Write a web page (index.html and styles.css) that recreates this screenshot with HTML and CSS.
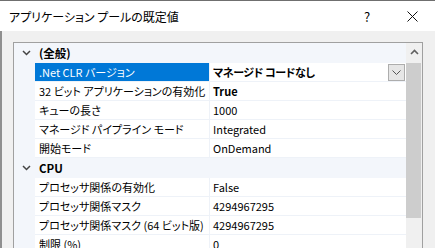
FILE: index.html
```html
<!DOCTYPE html>
<html lang="ja">
<head>
    <meta charset="UTF-8">
    <title>アプリケーション プールの既定値</title>
    <link rel="stylesheet" href="styles.css">
</head>
<body>
    <div class="window">
        <div class="titlebar">
            <span class="title">アプリケーション プールの既定値</span>
            <span class="help">?</span>
            <span class="close">
                <svg width="11" height="11" viewBox="0 0 11 11"><path d="M0.5 0.5 L10.5 10.5 M10.5 0.5 L0.5 10.5" stroke="#111" stroke-width="1" fill="none"/></svg>
            </span>
        </div>

        <div class="content">
            <div class="grid">
                <div class="rows">
                    <div class="category">
                        <span class="toggle"><svg width="9" height="6" viewBox="0 0 9 6"><polyline points="1,1 4.5,4.5 8,1" stroke="#444" stroke-width="1.5" fill="none"/></svg></span>
                        <span class="cat-name">(全般)</span>
                    </div>
                    <div class="row selected">
                        <span class="name">.Net CLR バージョン</span>
                        <span class="value bold">マネージド コードなし
                            <span class="dropdown"><svg width="9" height="5" viewBox="0 0 9 5"><polyline points="0.5,0.5 4.5,4.5 8.5,0.5" stroke="#555" stroke-width="1" fill="none"/></svg></span>
                        </span>
                    </div>
                    <div class="row">
                        <span class="name">32 ビット アプリケーションの有効化</span>
                        <span class="value bold">True</span>
                    </div>
                    <div class="row">
                        <span class="name">キューの長さ</span>
                        <span class="value">1000</span>
                    </div>
                    <div class="row">
                        <span class="name">マネージド パイプライン モード</span>
                        <span class="value">Integrated</span>
                    </div>
                    <div class="row">
                        <span class="name">開始モード</span>
                        <span class="value">OnDemand</span>
                    </div>
                    <div class="category">
                        <span class="toggle"><svg width="9" height="6" viewBox="0 0 9 6"><polyline points="1,1 4.5,4.5 8,1" stroke="#444" stroke-width="1.5" fill="none"/></svg></span>
                        <span class="cat-name">CPU</span>
                    </div>
                    <div class="row">
                        <span class="name">プロセッサ関係の有効化</span>
                        <span class="value">False</span>
                    </div>
                    <div class="row">
                        <span class="name">プロセッサ関係マスク</span>
                        <span class="value">4294967295</span>
                    </div>
                    <div class="row">
                        <span class="name">プロセッサ関係マスク (64 ビット版)</span>
                        <span class="value">4294967295</span>
                    </div>
                    <div class="row">
                        <span class="name">制限 (%)</span>
                        <span class="value">0</span>
                    </div>
                </div>
                <div class="scrollbar">
                    <div class="arrow-up"><svg width="9" height="6" viewBox="0 0 9 6"><polyline points="1,5 4.5,1.5 8,5" stroke="#606060" stroke-width="1.6" fill="none"/></svg></div>
                    <div class="thumb"></div>
                </div>
            </div>
        </div>
    </div>
</body>
</html>
```

FILE: styles.css
```css
body {
    margin: 0;
    font-family: "Noto Sans CJK JP", sans-serif;
    font-size: 11px;
    color: #000;
    font-feature-settings: "palt";
}
.window {
    width: 435px;
    height: 248px;
    overflow: hidden;
    background-color: #f0f0f0;
    border-top: 1px solid #6f6f6f;
    box-sizing: border-box;
}
.titlebar {
    height: 30px;
    background-color: #fff;
    display: flex;
    align-items: center;
}
.title {
    margin-left: 9px;
    flex: 1;
    font-size: 12px;
}
.help {
    width: 14px;
    margin-right: 29px;
    font-size: 13px;
}
.close {
    width: 11px;
    margin-right: 17px;
    display: flex;
}
.content {
    padding: 11px 12px 0 11px;
    border-left: 2px solid #8f8f8f;
}
.grid {
    display: flex;
    border: 1px solid #a0a0a0;
    border-bottom: none;
    background-color: #f3f6fb;
    height: 220px;
}
.rows {
    flex: 1;
}
.category {
    height: 19px;
    border-bottom: 1px solid #f3f6fb;
    display: flex;
    align-items: center;
    font-weight: bold;
    font-size: 11.5px;
}
.toggle {
    width: 25px;
    display: flex;
    justify-content: center;
}
.row {
    display: flex;
    height: 18px;
    margin-left: 21px;
    border-bottom: 1px solid #eef2f8;
    background-color: #fff;
    line-height: 18px;
}
.name {
    width: 175px;
    padding-left: 4px;
    box-sizing: border-box;
    border-right: 1px solid #eef2f8;
    white-space: nowrap;
}
.value {
    flex: 1;
    padding-left: 3px;
    position: relative;
    white-space: nowrap;
}
.bold {
    font-weight: bold;
}
.selected .name {
    background-color: #0078d7;
    color: #fff;
}
.selected .value {
    letter-spacing: -0.4px;
}
.dropdown {
    position: absolute;
    right: 1px;
    top: 1px;
    width: 15px;
    height: 15px;
    background-color: #e6e6e6;
    border: 1px solid #adadad;
    display: flex;
    align-items: center;
    justify-content: center;
}
.scrollbar {
    width: 16px;
    background-color: #f0f0f0;
}
.arrow-up {
    height: 18px;
    display: flex;
    align-items: center;
    justify-content: center;
}
.thumb {
    margin: 2px 1px 0 0;
    height: 155px;
    background-color: #cdcdcd;
}
```
